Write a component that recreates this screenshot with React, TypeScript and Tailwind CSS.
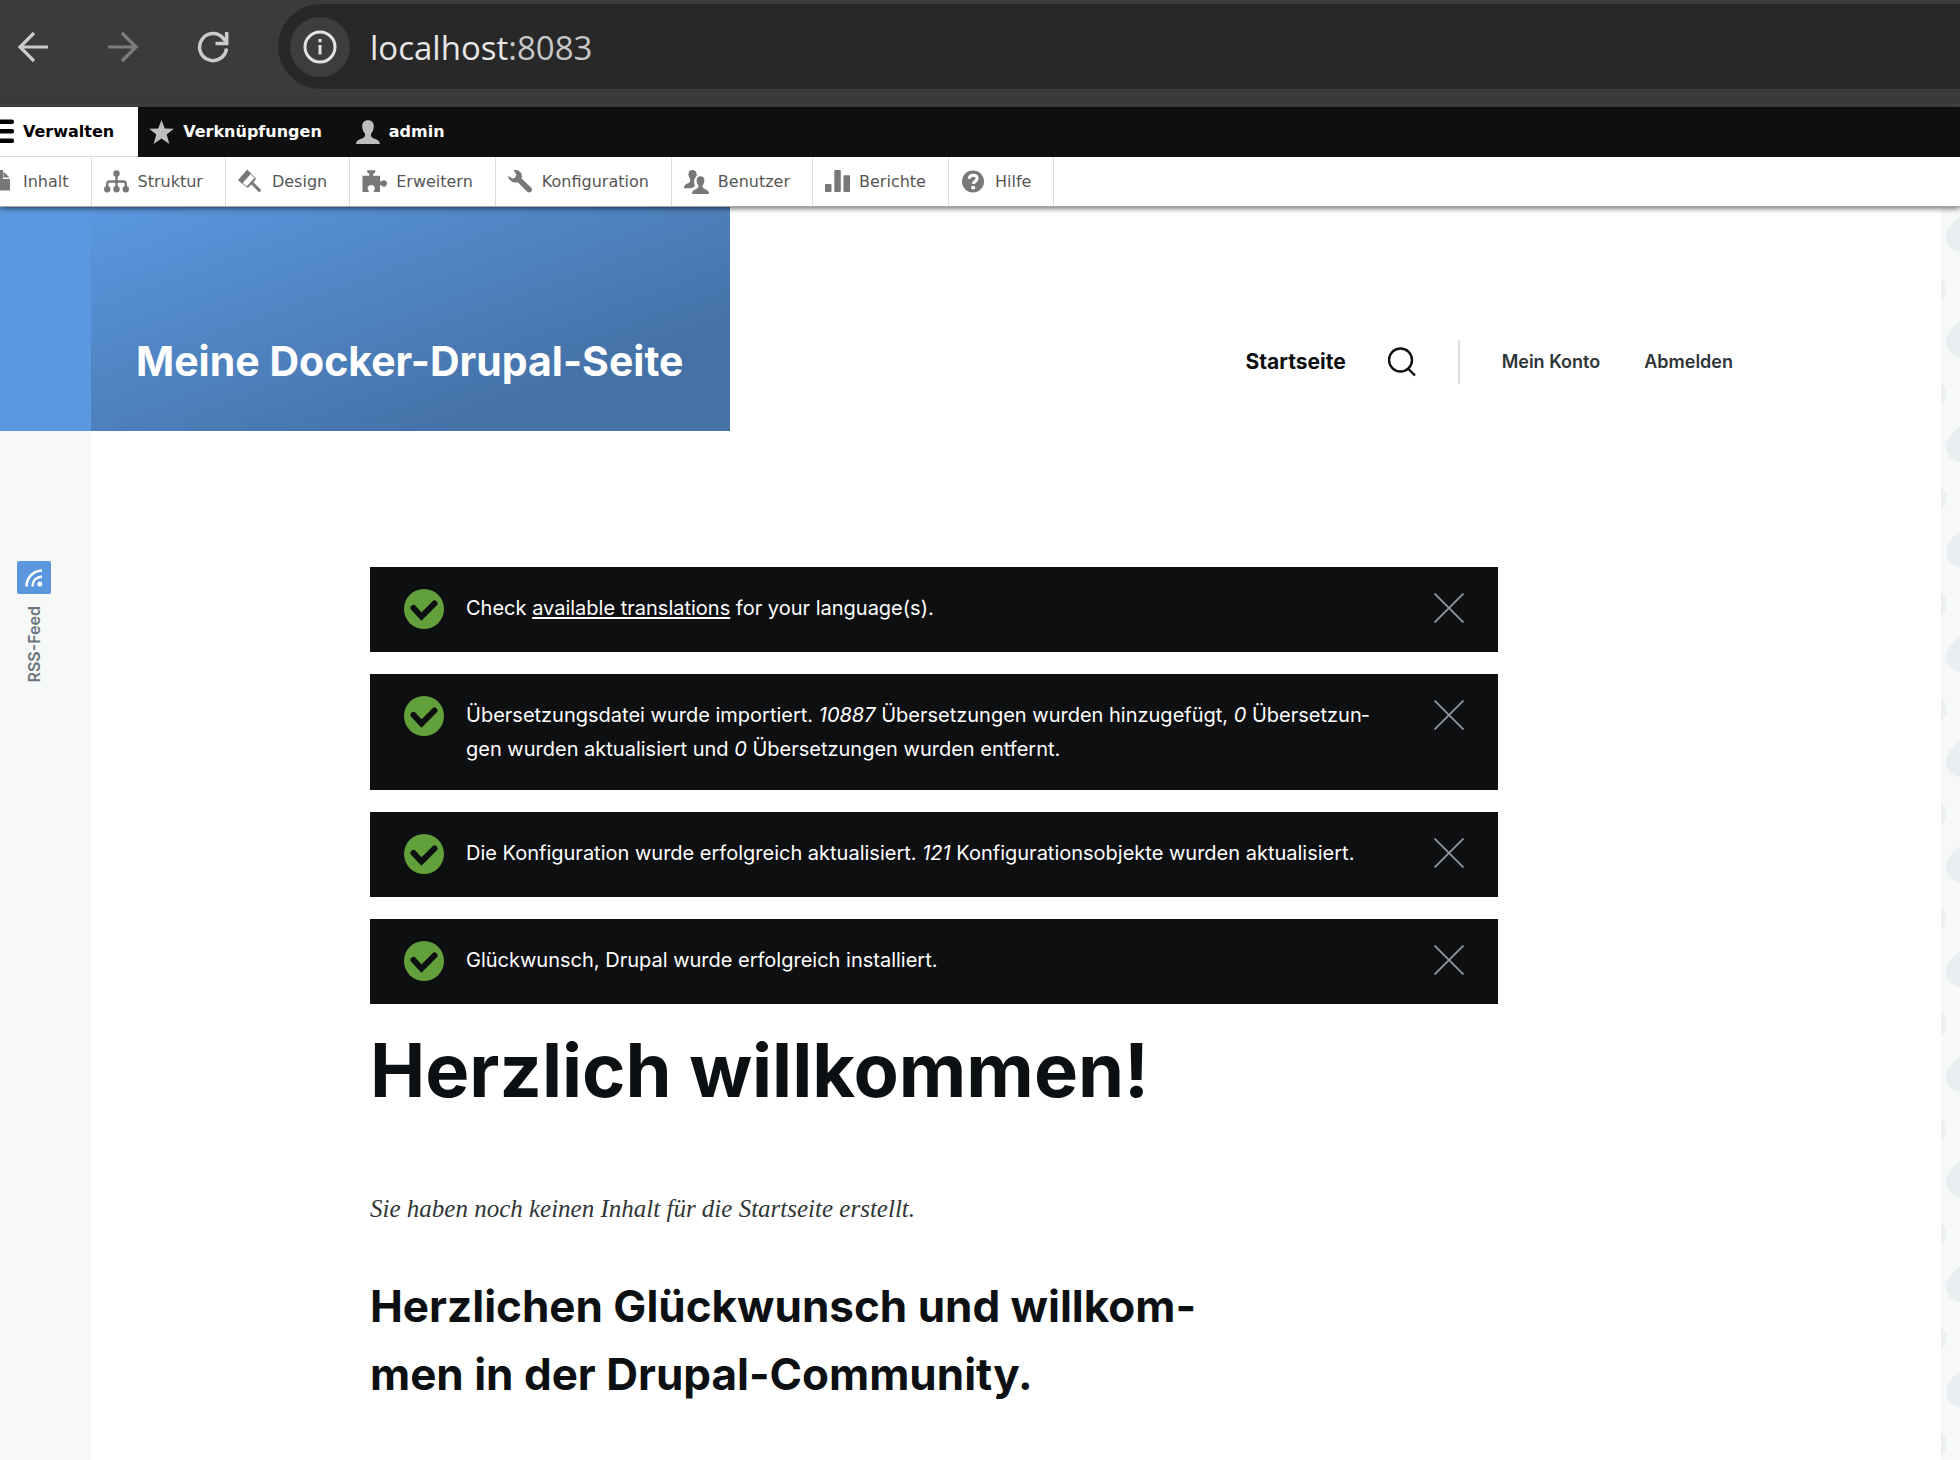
import React, { useState } from "react";
import type { ReactNode } from "react";

/* ---------- Icons ---------- */

const MenuIcon = () => (
  <svg viewBox="0 0 25 25" className="size-[25px] shrink-0" fill="currentColor" aria-hidden="true">
    <rect x="0" y="0.5" width="25" height="4.6" rx="2" />
    <rect x="0" y="10" width="25" height="4.6" rx="2" />
    <rect x="0" y="19.5" width="25" height="4.6" rx="2" />
  </svg>
);

const StarIcon = () => (
  <svg viewBox="0 0 25 25" className="size-[25px] shrink-0" fill="currentColor" aria-hidden="true">
    <path d="M12.500 0l3.300 8.600 9 .2-7.100 5.600 2.700 9.600-7.900-5.400L4.600 24l2.700-9.600L.2 8.800l9-.2z" />
  </svg>
);

const USER_PATH =
  "M12 .2C8 .2 6.1 2.800 6.200 6.400c.1 3 1.300 5.600 2.700 7.200.5 2.400 0 3.800-2.700 4.800C2 20 .3 20.600.1 24h23.800c-.2-3.400-1.900-4-6.100-5.600-2.700-1-3.200-2.400-2.700-4.800 1.400-1.600 2.600-4.200 2.700-7.200C17.900 2.800 16 .2 12 .2z";

const UserIcon = () => (
  <svg viewBox="0 0 24 24" className="size-6 shrink-0" fill="currentColor" aria-hidden="true">
    <path d={USER_PATH} />
  </svg>
);

function TrayIcon({ children }: { children: ReactNode }) {
  return (
    <svg viewBox="0 0 25 25" className="size-[25px] shrink-0" fill="currentColor" aria-hidden="true">
      {children}
    </svg>
  );
}

const PageIcon = () => (
  <TrayIcon>
    <path d="M3 1h11v9h7v11.500H3z" />
    <path d="M14.500 2.500l6 6h-6z" />
  </TrayIcon>
);

const StructureIcon = () => (
  <TrayIcon>
    <circle cx="12.500" cy="4.500" r="3.200" />
    <circle cx="3.200" cy="20.300" r="3.200" />
    <circle cx="12.500" cy="20.300" r="3.200" />
    <circle cx="21.800" cy="20.300" r="3.200" />
    <path d="M12.500 5v15M3.200 20v-5q0-2.500 2.500-2.500h13.600q2.500 0 2.500 2.500v5" fill="none" stroke="currentColor" strokeWidth="2.400" />
  </TrayIcon>
);

const BrushIcon = () => (
  <TrayIcon>
    <path d="M0 11L9.200.6l4 4L4 14.800z" />
    <path d="M12.500 4.500L17 9.500l-8 8.500L4 14" fill="none" stroke="currentColor" strokeWidth="1" />
    <path d="M16.600 8.700l1.200 1.300-2.300 3.400 7 6.900c1.300 1.500-.8 3.500-2.300 2.200l-6.600-7.100-3.900 3.300-1.200-1z" />
  </TrayIcon>
);

const PuzzleIcon = () => (
  <TrayIcon>
    <path d="M.5 6.800h6.800V4.700L5.200 3.500V1.300h8v2.200l-2.100 1.200v2.100H18v4.800c0 1.200 1 1.300 1.800.5 1.900-1.900 5.200-.7 5.200 2.300s-3.300 4.300-5.200 2.300c-.8-.8-1.800-.5-1.800.7v5.700h-5.300c-1.200 0-1.300-1-.5-1.800C14 19.300 12.300 16 9.200 16s-4.600 3.300-2.800 5.300c.8.8.5 1.800-.7 1.800H.5z" />
  </TrayIcon>
);

const WrenchIcon = () => (
  <TrayIcon>
    <path d="M5.600 1.200c3.900-.6 7.700 1.400 8.300 5.200.2 1.200 0 2.200-.3 3l9.400 9c2.900 3.200-1 6.900-4.100 4.100L9.800 13.300C5.500 14.600.6 11.800.1 6.700l4.300 2.800c1.300.4 3.500-1.500 3.900-3.600.1-.6-.2-1-.6-1.400z" />
  </TrayIcon>
);

const PeopleIcon = () => (
  <TrayIcon>
    <path d="M8.500 1C5.700 1 4.300 3 4.500 5.600c.1 1.900.8 3.300 1.600 4.300.3 2.600-.4 3.800-2.700 4.700C1.200 15.500 0 16.500 0 19.300h7.500c1-.9 2.200-1.400 3.600-2-1.300-3.700-1.500-7.600 1.600-10.600C13 3.300 11.500 1 8.500 1z" />
    <path d="M16.600 7.300c-2.800 0-4.100 1.900-4 4.500.1 2 .9 3.700 1.800 4.800.2 1.800-.4 2.700-2.200 3.400-2.700 1-4.200 1.900-4.200 5h17c0-3.100-1.500-4-4.200-5-1.800-.7-2.400-1.600-2.200-3.400.9-1.100 1.700-2.800 1.800-4.800.1-2.600-1.100-4.500-3.800-4.500z" />
  </TrayIcon>
);

const ChartIcon = () => (
  <TrayIcon>
    <rect x="0" y="15" width="6.500" height="8" rx="1" />
    <rect x="9.300" y="1" width="6.500" height="22" rx="1" />
    <rect x="18.500" y="6.300" width="6.500" height="16.700" rx="1" />
  </TrayIcon>
);

const HelpIcon = () => (
  <TrayIcon>
    <circle cx="12" cy="12.500" r="11" />
    <path d="M8.200 9.800c.2-2.400 1.700-3.600 4-3.600 2.200 0 3.900 1.200 3.900 3.200 0 2.900-3.700 2.900-3.700 5.700" fill="none" stroke="#fff" strokeWidth="3" />
    <rect x="10.300" y="17" width="3.800" height="3.300" rx=".8" fill="#fff" />
  </TrayIcon>
);

const CheckIcon = () => (
  <svg viewBox="0 0 40 40" className="size-10 shrink-0" aria-hidden="true">
    <circle cx="20" cy="20" r="20" fill="#61a03a" />
    <path d="M9.500 19l8 8.500L30.500 14.500" fill="none" stroke="#0d0f11" strokeWidth="6" strokeLinejoin="miter" strokeLinecap="round" />
  </svg>
);

/* ---------- Browser chrome ---------- */

function BrowserBar() {
  return (
    <div className="flex h-[107px] items-start border-b-3 border-[#474747] bg-[#3b3b3b] pt-1">
      <div className="flex h-[85px] w-[278px] shrink-0 items-center gap-[58px] pl-[17px] text-[#cbcbcb]">
        <button type="button" aria-label="Zurück">
          <svg viewBox="0 0 32 32" className="size-8" fill="none" stroke="currentColor" strokeWidth="3.200" aria-hidden="true">
            <path d="M31 16H4M17 2L3 16l14 14" />
          </svg>
        </button>
        <button type="button" aria-label="Vorwärts" className="text-[#7d7d7d]">
          <svg viewBox="0 0 32 32" className="size-8" fill="none" stroke="currentColor" strokeWidth="3.200" aria-hidden="true">
            <path d="M1 16h27M15 2l14 14-14 14" />
          </svg>
        </button>
        <button type="button" aria-label="Neu laden">
          <svg viewBox="0 0 32 32" className="size-8" fill="none" stroke="currentColor" strokeWidth="3.500" aria-hidden="true">
            <path d="M29.500 17.500A13.500 13.500 0 1 1 26.500 7.500L30 11.500" />
            <path d="M29.700 1v11.500H18.500" />
          </svg>
        </button>
      </div>
      <div className="flex h-[85px] min-w-0 flex-1 items-center gap-5 rounded-l-full bg-[#282828] pl-3">
        <button type="button" aria-label="Websiteinformationen" className="flex size-[60px] shrink-0 items-center justify-center rounded-full bg-[#3d3d3d] text-[#e3e3e3]">
          <svg viewBox="0 0 34 34" className="size-[34px]" fill="none" stroke="currentColor" strokeWidth="3" aria-hidden="true">
            <circle cx="17" cy="17" r="15" />
            <path d="M17 15v9.500M17 9v3.200" />
          </svg>
        </button>
        <div className="pt-0.5 font-['Open_Sans',sans-serif] text-[33px] leading-10 text-[#c7c7c7]">
          <span className="text-[#e6e6e6]">localhost</span>:8083
        </div>
      </div>
    </div>
  );
}

/* ---------- Admin toolbar ---------- */

const TRAY: { label: string; icon: ReactNode }[] = [
  { label: "Inhalt", icon: <PageIcon /> },
  { label: "Struktur", icon: <StructureIcon /> },
  { label: "Design", icon: <BrushIcon /> },
  { label: "Erweitern", icon: <PuzzleIcon /> },
  { label: "Konfiguration", icon: <WrenchIcon /> },
  { label: "Benutzer", icon: <PeopleIcon /> },
  { label: "Berichte", icon: <ChartIcon /> },
  { label: "Hilfe", icon: <HelpIcon /> },
];

function Toolbar() {
  return (
    <div className="relative z-10 overflow-x-clip font-['DejaVu_Sans',sans-serif] text-base shadow-[0_1px_6px_rgba(0,0,0,0.65)]">
      <nav aria-label="Werkzeugleiste" className="bg-[#0f0f0f] font-bold text-white">
        <div className="-ml-[23px] flex h-[50px]">
          <a href="#verwalten" className="flex items-center gap-[9px] border-b border-[#ddd] bg-white pr-6 pl-3 text-black">
            <MenuIcon />
            Verwalten
          </a>
          <a href="#verknuepfungen" className="flex items-center gap-[9px] pr-[22px] pl-[11px]">
            <span className="text-[#bebebe]"><StarIcon /></span>
            Verknüpfungen
          </a>
          <a href="#admin" className="flex items-center gap-[9px] px-3">
            <span className="text-[#bebebe]"><UserIcon /></span>
            admin
          </a>
        </div>
      </nav>
      <nav aria-label="Administration" className="border-b border-[#a6a6a6] bg-white text-[#565656]">
        <div className="-ml-[23px] flex h-[49px]">
          {TRAY.map((item) => (
            <a key={item.label} href={"#" + item.label.toLowerCase()} className="flex items-center gap-[9px] border-r border-[#ddd] pr-[22px] pl-3">
              <span className="text-[#787878]">{item.icon}</span>
              {item.label}
            </a>
          ))}
        </div>
      </nav>
    </div>
  );
}

/* ---------- Page ---------- */

function SiteHeader() {
  return (
    <header className="flex h-56 items-stretch justify-between">
      <div className="flex items-center bg-[linear-gradient(160deg,#5b98e0_0%,#4471a6_79%)] pt-[85px] pr-[46px] pb-[1px] pl-[45px]">
        <a href="#start" className="text-[41px] leading-[56px] font-bold whitespace-nowrap text-white">
          Meine Docker-Drupal-Seite
        </a>
      </div>
      <nav aria-label="Hauptnavigation" className="flex items-center pt-[86px] pr-52 text-lg font-semibold whitespace-nowrap text-[#2e3538]">
        <a href="#start" className="text-[21px] font-bold text-[#0d1012]">Startseite</a>
        <button type="button" aria-label="Suche" className="ml-[42px]">
          <svg viewBox="0 0 28 30" className="h-[30px] w-7" fill="none" stroke="#0d1012" strokeWidth="2.400" aria-hidden="true">
            <circle cx="12.500" cy="13" r="11.500" />
            <path d="M20 21.500l7 7" />
          </svg>
        </button>
        <span className="mr-[42px] ml-[42px] h-11 w-0.5 bg-[#dcdfe3]" />
        <a href="#konto">Mein Konto</a>
        <a href="#abmelden" className="ml-11">Abmelden</a>
      </nav>
    </header>
  );
}

function Message({ children }: { children: ReactNode }) {
  const [open, setOpen] = useState(true);
  if (!open) return null;
  return (
    <div role="status" className="flex items-start bg-[#0d0f11] px-[34px] pt-[22px] pb-[23px] text-xl leading-[34px] text-white">
      <CheckIcon />
      <p lang="de" className="mr-11 ml-[22px] min-w-0 flex-1 pt-0.5 pb-px">{children}</p>
      <button type="button" aria-label="Meldung schließen" onClick={() => setOpen(false)} className="mt-1 shrink-0">
        <svg viewBox="0 0 30 30" className="size-[30px]" stroke="#8e97a1" strokeWidth="1.800" aria-hidden="true">
          <path d="M.5.5l29 29M29.500.5l-29 29" />
        </svg>
      </button>
    </div>
  );
}

function LeftRail() {
  return (
    <aside className="w-[91px] shrink-0 bg-[#f7f9f8]">
      <div className="h-56 bg-[#5b98e0]" />
      <a href="#rss" className="mt-[130px] ml-[17px] flex w-[34px] flex-col items-center gap-3 text-base leading-5 font-semibold text-[#6a757e]">
        <span className="flex h-[33px] w-[34px] items-center justify-center rounded-xs bg-[#5b97de]">
          <svg viewBox="0 0 18 18" className="size-[18px]" fill="none" stroke="#fff" strokeWidth="2.500" aria-hidden="true">
            <path d="M1.500 17.500C1.500 9 8 1.800 17 1.500M7.500 17.500C7.500 12 11 8 17 7.800" />
            <circle cx="14.800" cy="15" r="2.500" fill="#fff" stroke="none" />
          </svg>
        </span>
        <span className="rotate-180 [writing-mode:vertical-rl]">RSS-Feed</span>
      </a>
    </aside>
  );
}

function RightPattern() {
  return (
    <aside className="relative w-[19px] shrink-0 bg-[#f7f9f9]" aria-hidden="true">
      <svg className="absolute inset-0 size-full">
        <defs>
          <pattern id="drops" width="19" height="105" patternUnits="userSpaceOnUse">
            <path d="M19 9C12 15 5 21 5 30c0 8 6 14 14 15z" fill="#eaeef1" />
            <path d="M0 70c4 3 5.500 7 5.500 12S4 91 0 93.500z" fill="#ecf0f2" />
          </pattern>
        </defs>
        <rect width="100%" height="100%" fill="url(#drops)" />
      </svg>
    </aside>
  );
}

export default function App() {
  return (
    <div className="flex min-h-screen flex-col bg-white">
      <BrowserBar />
      <Toolbar />
      <div className="flex flex-1 font-['Inter',sans-serif]">
        <LeftRail />
        <div className="min-w-0 flex-1">
          <SiteHeader />
          <main className="mt-[136px] ml-[279px] max-w-[1128px] text-[#0d1012]">
            <div className="flex flex-col gap-[22px]">
              <Message>
                Check <a href="#translations" className="underline decoration-2 underline-offset-2">available translations</a> for your language(s).
              </Message>
              <Message>
                Übersetzungsdatei wurde importiert. <em>10887</em> Übersetzungen wurden hinzugefügt, <em>0</em> Übersetzun&shy;gen wurden aktualisiert und <em>0</em> Übersetzungen wurden entfernt.
              </Message>
              <Message>
                Die Konfiguration wurde erfolgreich aktualisiert. <em>121</em> Konfigurationsobjekte wurden aktualisiert.
              </Message>
              <Message>Glückwunsch, Drupal wurde erfolgreich installiert.</Message>
            </div>
            <h1 className="mt-[22px] text-[74px] leading-[88px] font-bold">Herzlich willkommen!</h1>
            <p className="mt-[78px] font-['Liberation_Serif',serif] text-[25px] leading-[34px] text-[#313637] italic">
              Sie haben noch keinen Inhalt für die Startseite erstellt.
            </p>
            <h2 className="mt-[46px] max-w-[850px] text-[44px] leading-[68px] font-bold">
              Herzlichen Glückwunsch und willkom&shy;men in der Drupal-Community.
            </h2>
          </main>
        </div>
        <RightPattern />
      </div>
    </div>
  );
}
